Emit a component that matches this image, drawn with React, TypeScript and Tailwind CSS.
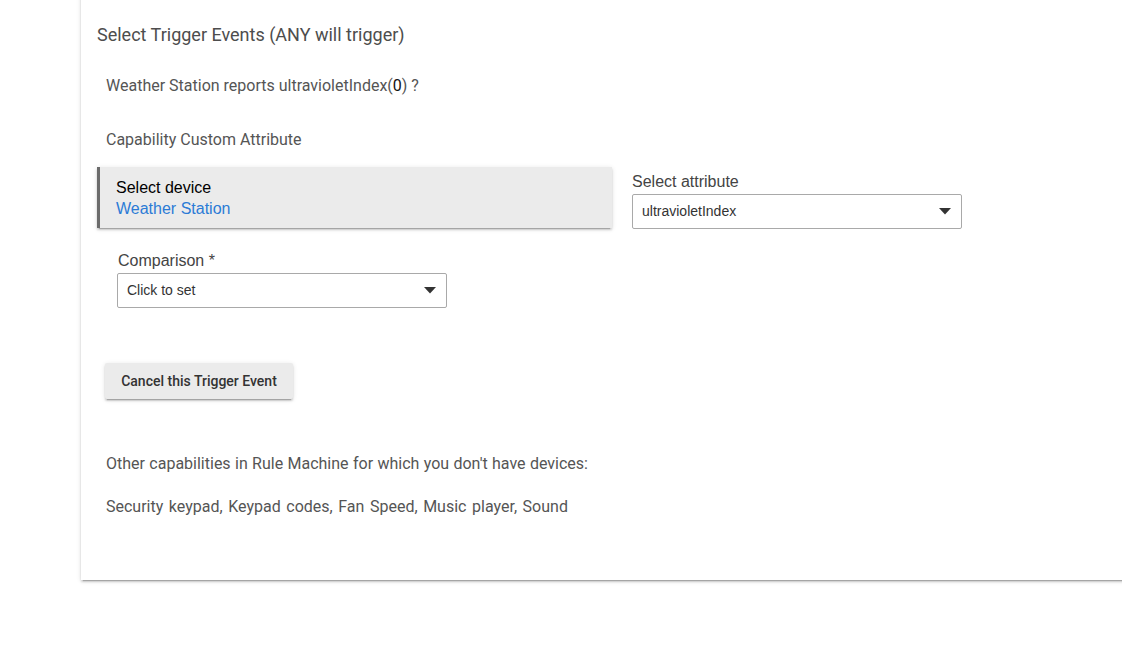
import React from "react";

function Caret() {
  return (
    <svg width="12" height="7" viewBox="0 0 12 7" className="shrink-0">
      <path d="M0 0 L12 0 L6 6.5 Z" fill="#333" />
    </svg>
  );
}

function SelectBox({ value, w }: { value: string; w: string }) {
  return (
    <div
      className={`${w} h-[35px] border border-[#a9a9a9] rounded-[2px] bg-white flex items-center justify-between pl-[9px] pr-[10px] text-[14px] text-[#333]`}
      style={{ fontFamily: '"Liberation Sans", Arial, sans-serif' }}
    >
      <span>{value}</span>
      <Caret />
    </div>
  );
}

export default function App() {
  const roboto = { fontFamily: 'Roboto, "Liberation Sans", sans-serif' };
  const arial = { fontFamily: '"Liberation Sans", Arial, sans-serif' };
  return (
    <div className="w-[1122px] h-[646px] overflow-hidden bg-white relative" style={roboto}>
      <div className="ml-[81px] mt-[-10px] w-[1100px] h-[590px] bg-white shadow-[0_2px_2px_0_rgba(0,0,0,0.14),0_3px_1px_-2px_rgba(0,0,0,0.2),0_1px_5px_0_rgba(0,0,0,0.12)] pl-[16px] pt-[33px]">
        <div className="text-[18px] leading-[24px] text-[#4d4d4d]">Select Trigger Events (ANY will trigger)</div>
        <div className="pl-[9px] mt-[29px] text-[16px] leading-[20px] text-[#555]">
          Weather Station reports ultravioletIndex(<span className="text-[#111]">0</span>) ?
        </div>
        <div className="pl-[9px] mt-[34px] text-[16px] leading-[20px] text-[#555]">Capability Custom Attribute</div>
        <div className="flex mt-[17px]">
          <div className="w-[515px] h-[61px] bg-[#ebebeb] border-l-[3px] border-[#6b6b6b] shadow-[0_2px_2px_0_rgba(0,0,0,0.14),0_3px_1px_-2px_rgba(0,0,0,0.2),0_1px_5px_0_rgba(0,0,0,0.12)] pl-[16px] pt-[11px]" style={arial}>
            <div className="text-[16px] leading-[20px] text-black">Select device</div>
            <div className="text-[16px] leading-[21px] text-[#2b7bd6]">Weather Station</div>
          </div>
          <div className="ml-[20px] pt-[5px]" style={arial}>
            <div className="text-[16px] leading-[20px] text-[#444] mb-[2px]">Select attribute</div>
            <SelectBox value="ultravioletIndex" w="w-[330px]" />
          </div>
        </div>
        <div className="pl-[20px] mt-[22px]" style={arial}>
          <div className="pl-[1px] text-[16px] leading-[20px] text-[#444] mb-[2px]">Comparison *</div>
          <SelectBox value="Click to set" w="w-[330px]" />
        </div>
        <div className="pl-[8px] mt-[55px]">
          <button className="w-[188px] h-[36px] bg-[#ebebeb] rounded-[2px] text-[14px] font-medium text-[#333] shadow-[0_2px_2px_0_rgba(0,0,0,0.14),0_3px_1px_-2px_rgba(0,0,0,0.2),0_1px_5px_0_rgba(0,0,0,0.12)]">
            Cancel this Trigger Event
          </button>
        </div>
        <div className="pl-[9px] mt-[55px] text-[16px] leading-[20px] text-[#555] [word-spacing:0.4px]">
          Other capabilities in Rule Machine for which you don't have devices:
        </div>
        <div className="pl-[9px] mt-[23px] text-[16px] leading-[20px] text-[#555] [word-spacing:1.6px]">
          Security keypad, Keypad codes, Fan Speed, Music player, Sound
        </div>
      </div>
    </div>
  );
}
